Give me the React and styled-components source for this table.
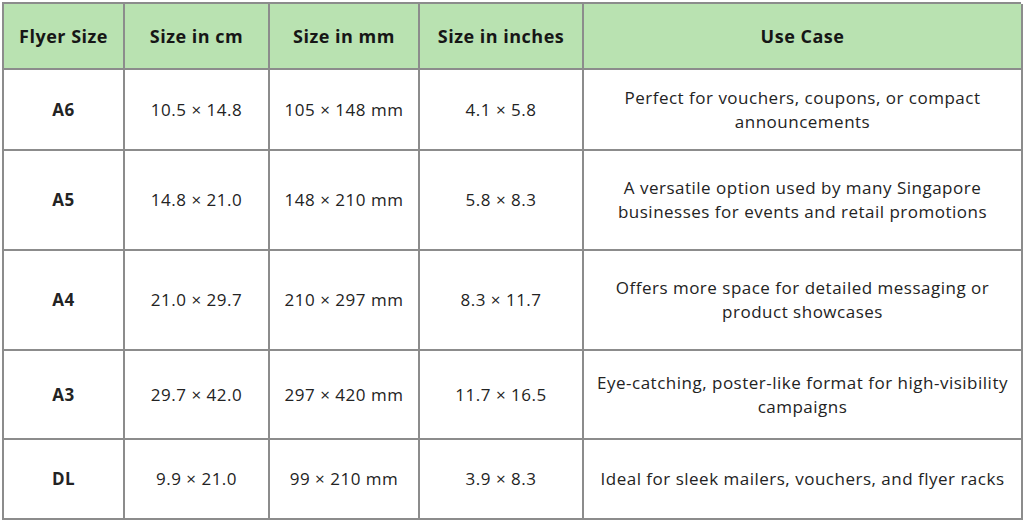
import React from "react";
import styled, { createGlobalStyle } from "styled-components";

const GlobalStyle = createGlobalStyle`
  html, body {
    margin: 0;
    padding: 0;
    background: #ffffff;
  }
  body {
    font-family: "Open Sans", "Liberation Sans", sans-serif;
    color: #1f1f1f;
  }
`;

const Page = styled.div`
  width: 1024px;
  height: 521px;
  padding: 2px 2px 0 2px;
  box-sizing: border-box;
`;

const Table = styled.div`
  display: grid;
  grid-template-columns: 121px 145px 150px 164px 439px;
  grid-template-rows: 66px 81px 100px 100px 89px 80px;
  border-top: 2px solid #8c8c8c;
  border-left: 2px solid #8c8c8c;
  width: 1019px;
  box-sizing: border-box;
`;

const Cell = styled.div`
  display: flex;
  align-items: center;
  justify-content: center;
  text-align: center;
  border-right: 2px solid #8c8c8c;
  border-bottom: 2px solid #8c8c8c;
  box-sizing: border-box;
  padding: 0 6px;
  font-size: 17px;
  letter-spacing: 0.5px;
  line-height: 24px;
  color: #232323;
  white-space: nowrap;
`;

const HeadCell = styled(Cell)`
  background: #b9e2b1;
  font-weight: 700;
  font-size: 18px;
  color: #161616;
`;

const NameCell = styled(Cell)`
  font-weight: 700;
`;

const headers = ["Flyer Size", "Size in cm", "Size in mm", "Size in inches", "Use Case"];

const rows = [
  ["A6", "10.5 × 14.8", "105 × 148 mm", "4.1 × 5.8", ["Perfect for vouchers, coupons, or compact", "announcements"]],
  ["A5", "14.8 × 21.0", "148 × 210 mm", "5.8 × 8.3", ["A versatile option used by many Singapore", "businesses for events and retail promotions"]],
  ["A4", "21.0 × 29.7", "210 × 297 mm", "8.3 × 11.7", ["Offers more space for detailed messaging or", "product showcases"]],
  ["A3", "29.7 × 42.0", "297 × 420 mm", "11.7 × 16.5", ["Eye-catching, poster-like format for high-visibility", "campaigns"]],
  ["DL", "9.9 × 21.0", "99 × 210 mm", "3.9 × 8.3", ["Ideal for sleek mailers, vouchers, and flyer racks"]],
];

const App = () => {
  return (
    <Page>
      <GlobalStyle />
      <Table>
        {headers.map((h) => (
          <HeadCell key={h}>{h}</HeadCell>
        ))}
        {rows.map(([name, cm, mm, inch, use]) => (
          <React.Fragment key={name}>
            <NameCell>{name}</NameCell>
            <Cell>{cm}</Cell>
            <Cell>{mm}</Cell>
            <Cell>{inch}</Cell>
            <Cell>
              <div>
                {use.map((line, i) => (
                  <div key={i}>{line}</div>
                ))}
              </div>
            </Cell>
          </React.Fragment>
        ))}
      </Table>
    </Page>
  );
};

export default App;
